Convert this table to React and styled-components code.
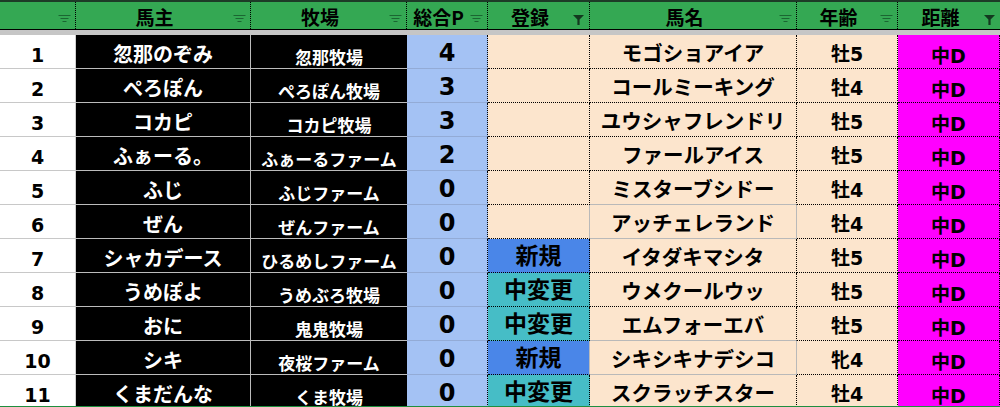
import React from 'react';
import styled, { createGlobalStyle, css } from 'styled-components';

const COLS = '76px 175px 156px 81px 102px 207px 101px 102px';
const DOT = '1px dotted #000';
const GRAY = '1px solid #b9b9b9';
const JP = '"Noto Sans CJK JP", "Noto Sans", sans-serif';
const NUM = '"DejaVu Sans", "Noto Sans CJK JP", sans-serif';

const GlobalStyle = createGlobalStyle`
  html, body { margin: 0; padding: 0; background: #fff; }
  body { font-family: ${JP}; }
  * { box-sizing: border-box; }
`;

const Sheet = styled.div`
  width: 1000px;
  height: 407px;
  overflow: hidden;
  display: flex;
  flex-direction: column;
  background: #fff;
`;

const HeaderRow = styled.div`
  flex: none;
  display: grid;
  grid-template-columns: ${COLS};
  height: 30px;
  background: #34a853;
  border-top: 2px solid #1d3b27;
  border-bottom: 1px solid #000;
`;

const HeaderCell = styled.div`
  display: flex;
  align-items: stretch;
  padding-right: 4px;
  border-right: ${(p) => (p.$last ? 'none' : DOT)};
`;

const HeaderLabel = styled.span`
  flex: 1;
  display: flex;
  align-items: center;
  justify-content: center;
  padding-top: 2px;
  font-size: 19px;
  font-weight: 700;
  line-height: 1;
  color: #000;
  white-space: nowrap;
`;

const IconSlot = styled.span`
  flex: none;
  width: 13px;
  display: flex;
  align-items: flex-end;
  justify-content: center;
  padding-bottom: ${(p) => (p.$filtered ? '4px' : '6px')};
`;

const Divider = styled.div`
  flex: none;
  height: 5px;
  background: #c6c6c6;
`;

const Body = styled.div`
  flex: 1;
  overflow: hidden;
`;

const BottomEdge = styled.div`
  flex: none;
  height: 1px;
  background: #1e8e3e;
`;

const Row = styled.div`
  display: grid;
  grid-template-columns: ${COLS};
  height: 34px;
`;

const cellBase = css`
  display: flex;
  align-items: center;
  justify-content: center;
  white-space: nowrap;
  font-weight: 700;
  line-height: 1;
`;

const IndexCell = styled.div`
  ${cellBase};
  background: #fff;
  color: #000;
  font-family: ${NUM};
  font-size: 19px;
  padding-top: 7px;
  border-right: 1px solid #d0d0d0;
  border-bottom: 1px solid #c8c8c8;
`;

const OwnerCell = styled.div`
  ${cellBase};
  background: #000;
  color: #fff;
  font-size: 20px;
  padding-top: 5px;
  border-right: 1px solid #bcbcbc;
  border-bottom: 1px solid #bcbcbc;
`;

const FarmCell = styled.div`
  ${cellBase};
  background: #000;
  color: #fff;
  font-size: 17px;
  padding-top: 10px;
  border-bottom: 1px solid #bcbcbc;
`;

const PointCell = styled.div`
  ${cellBase};
  background: #a4c2f4;
  color: #000;
  font-family: ${NUM};
  font-size: 24px;
  padding-top: 3px;
  border-right: ${DOT};
  border-bottom: 1px solid #93abd6;
`;

const REG_BG = { new: '#4a86e8', change: '#46bdc6', none: '#fce5cd' };

const RegCell = styled.div`
  ${cellBase};
  background: ${(p) => REG_BG[p.$kind]};
  color: #000;
  font-size: 23px;
  padding-bottom: 2px;
  border-right: ${(p) => (p.$plainRight ? GRAY : DOT)};
  border-bottom: ${DOT};
`;

const HorseCell = styled.div`
  ${cellBase};
  background: #fce5cd;
  color: #000;
  font-size: 20.5px;
  padding-top: 2px;
  border-right: ${(p) => (p.$plain ? GRAY : DOT)};
  border-bottom: ${(p) => (p.$plainBottom ? GRAY : DOT)};
`;

const AgeCell = styled.div`
  ${cellBase};
  background: #fce5cd;
  color: #000;
  font-family: ${NUM};
  font-size: 19px;
  padding-top: 6px;
  border-right: ${DOT};
  border-bottom: ${DOT};
`;

const DistCell = styled.div`
  ${cellBase};
  background: #ff00ff;
  color: #000;
  font-family: ${NUM};
  font-size: 19px;
  padding-top: 9px;
  border-right: ${DOT};
  border-bottom: ${DOT};
`;

const LinesIcon = () => (
  <svg width="13" height="8" viewBox="0 0 13 8">
    <g stroke="#1b6632" strokeWidth="1">
      <line x1="0.5" y1="0.5" x2="12.5" y2="0.5" />
      <line x1="2.5" y1="3.5" x2="10.5" y2="3.5" />
      <line x1="4.5" y1="6.5" x2="8.5" y2="6.5" />
    </g>
  </svg>
);

const FunnelIcon = () => (
  <svg width="11" height="10" viewBox="0 0 11 10">
    <path d="M0 0 H11 L6.6 4.6 V10 H4.4 V4.6 Z" fill="#13391f" />
  </svg>
);

const headers = [
  { label: '' },
  { label: '馬主' },
  { label: '牧場' },
  { label: '総合P' },
  { label: '登録', filtered: true },
  { label: '馬名' },
  { label: '年齢' },
  { label: '距離', filtered: true },
];

const rows = [
  ['忽那のぞみ', '忽那牧場', 4, '', 'モゴショアイア', '牡5'],
  ['ぺろぽん', 'ぺろぽん牧場', 3, '', 'コールミーキング', '牡4'],
  ['コカピ', 'コカピ牧場', 3, '', 'ユウシャフレンドリ', '牡5'],
  ['ふぁーる。', 'ふぁーるファーム', 2, '', 'ファールアイス', '牡5'],
  ['ふじ', 'ふじファーム', 0, '', 'ミスターブシドー', '牡4'],
  ['ぜん', 'ぜんファーム', 0, '', 'アッチェレランド', '牡4', true],
  ['シャカデース', 'ひるめしファーム', 0, '新規', 'イタダキマシタ', '牡5'],
  ['うめぽよ', 'うめぶろ牧場', 0, '中変更', 'ウメクールウッ', '牡5'],
  ['おに', '鬼鬼牧場', 0, '中変更', 'エムフォーエバ', '牡5'],
  ['シキ', '夜桜ファーム', 0, '新規', 'シキシキナデシコ', '牝4', true],
  ['くまだんな', 'くま牧場', 0, '中変更', 'スクラッチスター', '牡4'],
];

const regKind = (r) => (r === '新規' ? 'new' : r === '中変更' ? 'change' : 'none');

export default function App() {
  return (
    <>
      <GlobalStyle />
      <Sheet>
        <HeaderRow>
          {headers.map((h, i) => (
            <HeaderCell key={i} $last={i === headers.length - 1}>
              <HeaderLabel>{h.label}</HeaderLabel>
              <IconSlot $filtered={h.filtered}>
                {h.filtered ? <FunnelIcon /> : <LinesIcon />}
              </IconSlot>
            </HeaderCell>
          ))}
        </HeaderRow>
        <Divider />
        <Body>
          {rows.map((r, i) => {
            const [owner, farm, pts, reg, horse, age, plain] = r;
            const nextPlain = rows[i + 1] && rows[i + 1][6];
            return (
              <Row key={i}>
                <IndexCell>{i + 1}</IndexCell>
                <OwnerCell>{owner}</OwnerCell>
                <FarmCell>{farm}</FarmCell>
                <PointCell>{pts}</PointCell>
                <RegCell $kind={regKind(reg)} $plainRight={!!plain}>{reg}</RegCell>
                <HorseCell $plain={!!plain} $plainBottom={!!plain || !!nextPlain}>{horse}</HorseCell>
                <AgeCell>{age}</AgeCell>
                <DistCell>中D</DistCell>
              </Row>
            );
          })}
        </Body>
        <BottomEdge />
      </Sheet>
    </>
  );
}
